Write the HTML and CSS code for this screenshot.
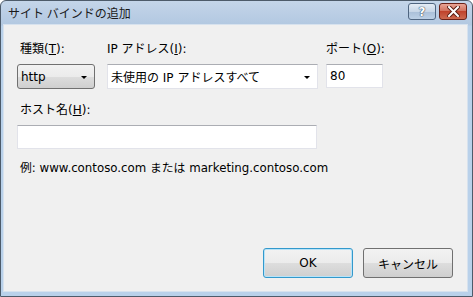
FILE: index.html
```html
<!DOCTYPE html>
<html lang="ja">
<head>
    <meta charset="UTF-8">
    <title>サイト バインドの追加</title>
    <link rel="stylesheet" href="styles.css">
</head>
<body>

    <div class="window">
        <!-- Title bar -->
        <div class="titlebar">
            <span class="title">サイト バインドの追加</span>
            <div class="caption-buttons">
                <div class="cap-btn help">?</div>
                <div class="cap-btn close">
                    <svg width="13" height="11" viewBox="0 0 13 11">
                        <path d="M2 1 L11 10 M11 1 L2 10" stroke="#5a1f14" stroke-width="4" stroke-linecap="square"/>
                        <path d="M2 1 L11 10 M11 1 L2 10" stroke="#ffffff" stroke-width="2" stroke-linecap="square"/>
                    </svg>
                </div>
            </div>
        </div>

        <div class="client">
            <div class="row">
                <div class="field type-field">
                    <label class="first">種類(<u>T</u>):</label>
                    <div class="combo button-combo">http<span class="arrow"></span></div>
                </div>
                <div class="field ip-field">
                    <label>IP アドレス(<u>I</u>):</label>
                    <div class="combo edit-combo">未使用の IP アドレスすべて<span class="arrow"></span></div>
                </div>
                <div class="field port-field">
                    <label>ポート(<u>O</u>):</label>
                    <input class="textbox" type="text" value="80">
                </div>
            </div>

            <div class="field host-field">
                <label class="first">ホスト名(<u>H</u>):</label>
                <input class="textbox" type="text" value="">
            </div>

            <p class="example">例: www.contoso.com または marketing.contoso.com</p>

            <div class="buttons">
                <button class="btn default">OK</button>
                <button class="btn">キャンセル</button>
            </div>
        </div>
    </div>

</body>
</html>
```

FILE: styles.css
```css
body {
    margin: 0;
    font-family: "DejaVu Sans", "Noto Sans CJK JP", sans-serif;
    font-size: 12px;
    color: #000;
    background: #fff;
}

.window {
    width: 473px;
    height: 297px;
    box-sizing: border-box;
    border: 1px solid #4d5b6a;
    border-radius: 6px 6px 0 0;
    background: linear-gradient(to bottom, #c4d5e9 0px, #b2c8e1 24px, #b9d1ea 25px, #b9d1ea 100%);
    display: flex;
    flex-direction: column;
    padding: 0 4px 4px 2px;
}

/* Title bar */
.titlebar {
    height: 23px;
    display: flex;
    align-items: center;
    justify-content: space-between;
    padding-left: 5px;
}

.title {
    font-family: "Noto Sans CJK JP", sans-serif;
    font-size: 12px;
    color: #1a1a1a;
    margin-top: -1px;
}

.caption-buttons {
    display: flex;
    gap: 3px;
    margin-top: -2px;
    margin-right: 1px;
}

.cap-btn {
    height: 15px;
    border: 1px solid #4f6580;
    border-radius: 3px;
    display: flex;
    align-items: center;
    justify-content: center;
    box-sizing: content-box;
}

.help {
    width: 26px;
    background: linear-gradient(to bottom, #e4ecf5 0%, #c7d6e7 50%, #a9bfd8 51%, #bcd0e6 100%);
    font-family: "DejaVu Sans", sans-serif;
    font-weight: bold;
    font-size: 12px;
    color: #fff;
    text-shadow: 0 0 1px #3b4f66, 0 0 1px #3b4f66, 0 0 1px #3b4f66;
}

.close {
    width: 26px;
    border-color: #6b2218;
    background: linear-gradient(to bottom, #e9a596 0%, #d2735f 45%, #c0432c 50%, #cc6a50 100%);
}

/* Client area */
.client {
    flex: 1;
    background: #f0f0f0;
    border: 1px solid #d7e2ee;
    padding: 0 0 0 13px;
    display: flex;
    flex-direction: column;
}

.row {
    display: flex;
    margin-top: 17px;
}

.field {
    display: flex;
    flex-direction: column;
}

.field label {
    height: 15px;
    line-height: 15px;
    margin-bottom: 7px;
    white-space: nowrap;
}

.field label.first {
    margin-left: 3px;
}

.type-field {
    width: 78px;
    margin-right: 12px;
}

.ip-field {
    width: 211px;
    margin-right: 8px;
}

.port-field {
    width: 57px;
}

.combo {
    height: 25px;
    box-sizing: border-box;
    display: flex;
    align-items: center;
    padding-left: 3px;
    position: relative;
    white-space: nowrap;
}

.button-combo {
    border: 1px solid #707070;
    border-radius: 3px;
    background: linear-gradient(to bottom, #f2f2f2 0%, #ebebeb 50%, #dddddd 51%, #cfcfcf 100%);
}

.edit-combo {
    border: 1px solid #e2e3ea;
    border-top-color: #abadb3;
    background: #fff;
}

.arrow {
    position: absolute;
    right: 7px;
    top: 11px;
    width: 0;
    height: 0;
    border-left: 3px solid transparent;
    border-right: 3px solid transparent;
    border-top: 3px solid #000;
}

.textbox {
    height: 24px;
    box-sizing: border-box;
    border: 1px solid #e2e3ea;
    border-top-color: #abadb3;
    background: #fff;
    font-family: inherit;
    font-size: 12px;
    padding: 0 3px;
    margin: 0;
    outline: none;
}

.host-field {
    margin-top: 14px;
    width: 300px;
}

.host-field label {
    margin-bottom: 7px;
}

.example {
    margin: 12px 0 0 3px;
    height: 15px;
    line-height: 15px;
    font-size: 11.8px;
}

.buttons {
    margin-top: auto;
    margin-bottom: 13px;
    margin-right: 14px;
    display: flex;
    justify-content: flex-end;
    gap: 10px;
}

.btn {
    width: 90px;
    height: 30px;
    border: 1px solid #707070;
    border-radius: 3px;
    background: linear-gradient(to bottom, #f2f2f2 0%, #ebebeb 50%, #dddddd 51%, #cfcfcf 100%);
    font-family: inherit;
    font-size: 12px;
    color: #000;
    padding: 0;
}

.btn.default {
    border-color: #3399cc;
    box-shadow: inset 0 0 0 1px #b8e3f8;
}
```
